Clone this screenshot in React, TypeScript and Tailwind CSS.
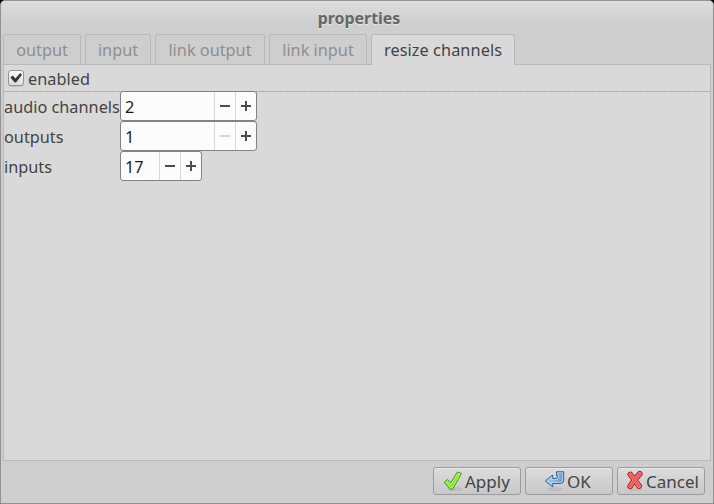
import type { ReactNode } from "react";

const tabs = [
  { label: "output", width: "w-[78px]" },
  { label: "input", width: "w-[66px]" },
  { label: "link output", width: "w-[110px]" },
  { label: "link input", width: "w-[98px]" },
];

function Spin({ value, width, atMin = false }: { value: string; width: string; atMin?: boolean }) {
  return (
    <div className={`flex h-[30px] ${width} rounded-[3px] border border-[#828282] bg-[#fcfcfc] text-[#1c1c1c]`}>
      <span className="flex-1 pl-[4px] leading-[30px]">{value}</span>
      <span className="flex w-[21px] items-center justify-center border-l border-[#d8d8d8]">
        <span className={`h-[2px] w-[10px] ${atMin ? "bg-[#d6d6d6]" : "bg-[#4c4c4c]"}`} />
      </span>
      <span className="flex w-[21px] items-center justify-center border-l border-[#d8d8d8]">
        <svg width="10" height="10" fill="#4c4c4c" shapeRendering="crispEdges">
          <path d="M4 0h2v4h4v2H6v4H4V6H0V4h4z" />
        </svg>
      </span>
    </div>
  );
}

function Button({ children, label, pad }: { children: ReactNode; label: string; pad: string }) {
  return (
    <button className={`flex h-[28px] w-[88px] items-center rounded-[3px] border border-[#9c9c9c] bg-linear-to-b from-[#dcdcdc] to-[#c8c8c8] shadow-[inset_0_1px_0_#e8e8e8] ${pad}`}>
      {children}
      <span className="leading-[27px]">{label}</span>
    </button>
  );
}

function ApplyIcon() {
  return (
    <svg width="22" height="22" viewBox="0 0 22 22" className="shrink-0">
      <ellipse cx="12" cy="19" rx="8" ry="2" fill="#888" opacity=".2" />
      <path d="M1.2 12.2 4.3 9.6 7.8 12.7 14.4 2 18.6 3.5 9.5 19.2 7.4 19.4Z" fill="#8ae234" stroke="#4b9610" strokeLinejoin="round" />
      <path d="M2.8 12.1 4.3 10.9 8.1 14.3 14.9 3.3 17.1 4.1 8.9 18 7.9 18.1Z" fill="none" stroke="#c8f5a0" strokeWidth=".8" />
    </svg>
  );
}

function OkIcon() {
  return (
    <svg width="23" height="22" viewBox="0 0 23 22" className="shrink-0">
      <defs>
        <linearGradient id="ok-fill" x1="0" x2="1" y1="0" y2="0">
          <stop stopColor="#a9cdf0" />
          <stop offset="1" stopColor="#6d9dcd" />
        </linearGradient>
      </defs>
      <ellipse cx="11" cy="19" rx="8" ry="2" fill="#888" opacity=".2" />
      <path d="M12.5 1.8h7.2v8.4q0 3.3-3.5 3.3H8.7v3.3L1.3 11l7.4-6v3.5h3.1q1.7 0 1.7-1.7V5.8h-1Z" fill="url(#ok-fill)" stroke="#2d5c96" strokeLinejoin="round" />
      <path d="M13.5 2.8h5.2v7.2q0 2.5-2.5 2.5H7.7v2.2L2.9 11l4.8-4v2.5h4.1q2.7 0 2.7-2.7V4.8h-1Z" fill="none" stroke="#cce1f5" strokeWidth=".7" />
    </svg>
  );
}

function CancelIcon() {
  return (
    <svg width="20" height="22" viewBox="0 0 20 22" fill="none" strokeLinecap="round" className="shrink-0">
      <ellipse cx="9" cy="19" rx="8" ry="2" fill="#888" opacity=".2" />
      <g stroke="#b01818" strokeWidth="5.6">
        <path d="M4.3 4.4Q7 8 13.2 16M13.8 3.8Q8.8 9 4.2 16.2" />
      </g>
      <g stroke="#ff8f8f" strokeWidth="3.8">
        <path d="M4.3 4.4Q7 8 13.2 16M13.8 3.8Q8.8 9 4.2 16.2" />
      </g>
      <g stroke="#ee5c5c" strokeWidth="2.6">
        <path d="M4.3 4.4Q7 8 13.2 16M13.8 3.8Q8.8 9 4.2 16.2" />
      </g>
    </svg>
  );
}

export default function App() {
  return (
    <div className="h-[504px] w-[714px] bg-black font-['Noto_Sans',sans-serif] text-[16.3px] text-[#444]">
      <div className="flex h-full flex-col rounded-t-[5px] border border-[#929292] bg-[#cecece] px-[2px]">
        <header className="-mx-[2px] flex h-[33px] shrink-0 items-center justify-center rounded-t-[4px] bg-linear-to-b from-[#dddddd] to-[#cecece] to-70% text-[15.9px] font-bold text-[#666] [text-shadow:0_1px_0_#e4e4e4]">
          <h1 className="pl-[4px] leading-[24px]">properties</h1>
        </header>
        <nav className="z-10 flex h-[31px] shrink-0 gap-[4px]">
          {tabs.map((tab) => (
            <div key={tab.label} className={`h-[30px] ${tab.width} rounded-t-[3px] border border-b-0 border-[#b9b9b9] bg-[#cecece] text-center leading-[30px] text-[#8e8e8e]`}>
              {tab.label}
            </div>
          ))}
          <div className="h-[31px] w-[144px] rounded-t-[3px] border border-b-0 border-[#b9b9b9] bg-[#d9d9d9] text-center leading-[30px] tracking-[0.08px]">
            resize channels
          </div>
        </nav>
        <main className="-mt-px h-[397px] w-[708px] shrink-0 border border-[#b9b9b9] bg-[#d9d9d9]">
          <label className="flex h-[26px] items-center pl-[4px]">
            <span className="flex size-[16px] items-center justify-center rounded-[3px] border border-[#949494] bg-linear-to-b from-[#fafafa] to-[#dedede] shadow-[0_1px_0_#c5c5c5]">
              <svg width="12" height="11" viewBox="0 0 12 11" className="shrink-0">
                <path d="m.4 4.4 2.4-2 2.6 3L10.2 0 12 1.8 6 9.6H4.6Z" fill="#383838" />
              </svg>
            </span>
            <span className="pt-[2px] pl-[4px] leading-[26px] tracking-[0.05px]">enabled</span>
          </label>
          <div className="h-px bg-[repeating-linear-gradient(90deg,#a6a6a6_0_2px,#c8c8c8_2px_3px)]" />
          <div className="-mt-px grid auto-rows-[30px] grid-cols-[116px_137px] leading-[32px]">
            <span className="whitespace-nowrap">audio channels</span>
            <Spin value="2" width="w-[137px]" />
            <span>outputs</span>
            <Spin value="1" width="w-[137px]" atMin />
            <span>inputs</span>
            <Spin value="17" width="w-[82px]" />
          </div>
        </main>
        <footer className="flex justify-end gap-[4px] pt-[6px] pr-[6px] text-[17px]">
          <Button label="Apply" pad="pl-[9px]"><ApplyIcon /></Button>
          <Button label="OK" pad="pl-[18px]"><OkIcon /></Button>
          <Button label="Cancel" pad="pl-[8px]"><CancelIcon /></Button>
        </footer>
      </div>
    </div>
  );
}
